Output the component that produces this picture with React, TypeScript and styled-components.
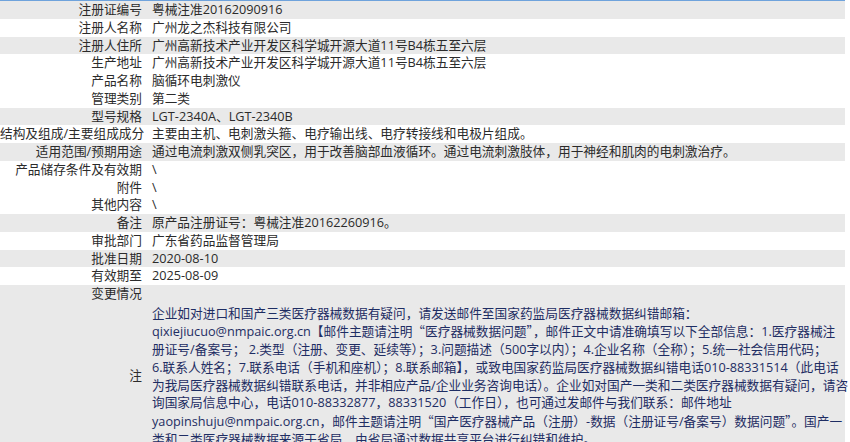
import React from "react";
import styled, { createGlobalStyle } from "styled-components";

const GlobalStyle = createGlobalStyle`
  html, body {
    margin: 0;
    padding: 0;
    background: #ffffff;
  }
  body {
    font-family: "Open Sans", "Noto Sans CJK SC", sans-serif;
    font-size: 12.7px;
    color: #2b2b2b;
  }
`;

const Table = styled.div`
  width: 845px;
  border-top: 1px solid #6fa3dc;
  display: flex;
  flex-direction: column;
`;

const Row = styled.div<{ $shade?: boolean }>`
  display: grid;
  grid-template-columns: 147px 1fr;
  min-height: 17.75px;
  line-height: 17.75px;
  background: ${(p) => (p.$shade ? "#e9e9e9" : "#ffffff")};
`;

const Label = styled.div<{ $middle?: boolean }>`
  text-align: right;
  padding-right: 5px;
  white-space: nowrap;
  align-self: ${(p) => (p.$middle ? "center" : "start")};
`;

const Value = styled.div`
  padding-left: 5px;
  white-space: nowrap;
`;

const NoteBody = styled.div`
  padding: 2px 0 0 5px;
  color: #1e2d63;
  line-height: 17.7px;
  display: flex;
  flex-direction: column;
`;

const NoteLine = styled.span`
  white-space: nowrap;
`;

const Quote = styled.span`
  font-family: "Noto Sans CJK SC", sans-serif;
  font-feature-settings: "fwid";
`;

type Item = { label: string; value: string; shade: boolean };

const items: Item[] = [
  { label: "注册证编号", value: "粤械注准20162090916", shade: true },
  { label: "注册人名称", value: "广州龙之杰科技有限公司", shade: false },
  { label: "注册人住所", value: "广州高新技术产业开发区科学城开源大道11号B4栋五至六层", shade: true },
  { label: "生产地址", value: "广州高新技术产业开发区科学城开源大道11号B4栋五至六层", shade: false },
  { label: "产品名称", value: "脑循环电刺激仪", shade: false },
  { label: "管理类别", value: "第二类", shade: false },
  { label: "型号规格", value: "LGT-2340A、LGT-2340B", shade: true },
  { label: "结构及组成/主要组成成分", value: "主要由主机、电刺激头箍、电疗输出线、电疗转接线和电极片组成。", shade: false },
  { label: "适用范围/预期用途", value: "通过电流刺激双侧乳突区，用于改善脑部血液循环。通过电流刺激肢体，用于神经和肌肉的电刺激治疗。", shade: true },
  { label: "产品储存条件及有效期", value: "\\", shade: false },
  { label: "附件", value: "\\", shade: false },
  { label: "其他内容", value: "\\", shade: false },
  { label: "备注", value: "原产品注册证号：粤械注准20162260916。", shade: true },
  { label: "审批部门", value: "广东省药品监督管理局", shade: false },
  { label: "批准日期", value: "2020-08-10", shade: true },
  { label: "有效期至", value: "2025-08-09", shade: false },
  { label: "变更情况", value: "", shade: true },
];

export default function App() {
  return (
    <>
      <GlobalStyle />
      <Table>
        {items.map((it) => (
          <Row key={it.label} $shade={it.shade}>
            <Label>{it.label}</Label>
            <Value>{it.value}</Value>
          </Row>
        ))}
        <Row $shade>
          <Label $middle>注</Label>
          <NoteBody>
            <NoteLine>企业如对进口和国产三类医疗器械数据有疑问，请发送邮件至国家药监局医疗器械数据纠错邮箱：</NoteLine>
            <NoteLine>
              qixiejiucuo@nmpaic.org.cn【邮件主题请注明<Quote>“</Quote>医疗器械数据问题<Quote>”</Quote>，邮件正文中请准确填写以下全部信息：1.医疗器械注
            </NoteLine>
            <NoteLine>册证号/备案号； 2.类型（注册、变更、延续等）；3.问题描述（500字以内）；4.企业名称（全称）；5.统一社会信用代码；</NoteLine>
            <NoteLine>6.联系人姓名；7.联系电话（手机和座机）；8.联系邮箱】，或致电国家药监局医疗器械数据纠错电话010-88331514（此电话</NoteLine>
            <NoteLine>为我局医疗器械数据纠错联系电话，并非相应产品/企业业务咨询电话）。企业如对国产一类和二类医疗器械数据有疑问，请咨</NoteLine>
            <NoteLine>询国家局信息中心，电话010-88332877，88331520（工作日），也可通过发邮件与我们联系：邮件地址</NoteLine>
            <NoteLine>
              yaopinshuju@nmpaic.org.cn，邮件主题请注明<Quote>“</Quote>国产医疗器械产品（注册）-数据（注册证号/备案号）数据问题<Quote>”</Quote>。国产一
            </NoteLine>
            <NoteLine>类和二类医疗器械数据来源于省局，由省局通过数据共享平台进行纠错和维护。</NoteLine>
          </NoteBody>
        </Row>
      </Table>
    </>
  );
}
